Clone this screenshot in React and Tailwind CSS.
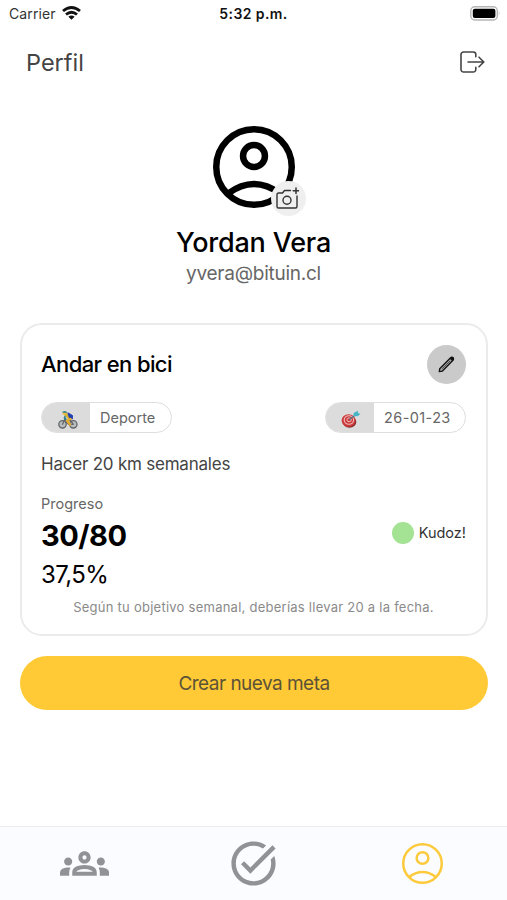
import React from "react";
import { MdOutlineGroups, MdTaskAlt } from "react-icons/md";

function Wifi() {
  return (
    <svg width="19" height="14" viewBox="0 0 19 14" fill="none" stroke="#111" strokeWidth="2.9" className="mb-0.5">
      <path d="M1 5 Q9.500 -2 18 5" />
      <path d="M4 8.500 Q9.500 4 15 8.500" />
      <path d="M9.500 13.800 L6.400 10.800 Q9.500 8.400 12.600 10.800 Z" fill="#111" stroke="none" />
    </svg>
  );
}

function Battery() {
  return (
    <svg width="31" height="15" viewBox="0 0 31 15" className="mb-0.5">
      <rect x="0.800" y="0.800" width="26.500" height="13.200" rx="4" fill="#fff" stroke="#b5b5b5" strokeWidth="1.400" />
      <rect x="2.800" y="2.700" width="22.600" height="9.400" rx="2" fill="#000" />
      <path d="M28.800 5.200 Q30.600 7.400 28.800 9.600Z" fill="#aaa" />
    </svg>
  );
}

function Exit() {
  return (
    <svg width="26" height="22" viewBox="0 0 26 22" fill="none" stroke="#444" strokeWidth="1.600" strokeLinecap="round" strokeLinejoin="round" className="mb-0.5">
      <path d="M15.800 5.800V3.500a2.500 2.500 0 0 0-2.500-2.500H3.500a2.500 2.500 0 0 0-2.500 2.500v15a2.500 2.500 0 0 0 2.500 2.500h9.800a2.500 2.500 0 0 0 2.500-2.500v-2.300" />
      <path d="M8 11h15.500M19 6.200l4.800 4.800-4.800 4.800" />
    </svg>
  );
}

function Person({ size, stroke, color }) {
  return (
    <svg width={size} height={size} viewBox="0 0 82 82" fill="none" stroke={color} strokeWidth={stroke}>
      <circle cx="41" cy="41" r={41 - stroke / 2} />
      <circle cx="41" cy="30" r={14.200 - stroke / 2} />
      <path d="M15 67.500Q41 48.500 67 67.500" />
    </svg>
  );
}

function CameraPlus() {
  return (
    <svg width="23" height="22" viewBox="0 0 23 22" fill="none" stroke="#333" strokeWidth="1.400" strokeLinecap="round" strokeLinejoin="round" className="mr-px mb-px">
      <path d="M14.500 3.500H8.500L6.500 6H2.500Q1 6 1 7.500V19.500Q1 21 2.500 21H19.500Q21 21 21 19.500V9" />
      <circle cx="11" cy="13.200" r="4" />
      <path d="M20 1v5.600M17.200 3.800h5.600" strokeWidth="1.500" />
    </svg>
  );
}

function Pencil() {
  return (
    <svg width="17" height="17" viewBox="0 0 17 17" strokeLinejoin="round">
      <path d="M1.300 15.700L1.700 12.700L12.600 1.800a1.550 1.550 0 0 1 2.400 2.400L4.200 15.200Z" fill="#a5a5a5" stroke="#111" strokeWidth="1.300" />
      <path d="M4.300 12.700L12 5" stroke="#333" strokeWidth="0.700" />
      <path d="M11.800 2.700l2.300 2.300 1.400-1.400a1.600 1.600 0 0 0-2.300-2.300Z" fill="#111" />
    </svg>
  );
}

function Cyclist() {
  return (
    <svg width="20" height="19" viewBox="0 0 20 19" fill="none" strokeLinecap="round" strokeLinejoin="round">
      <g stroke="#62666a" strokeWidth="1.300">
        <circle cx="4.500" cy="14.300" r="3.700" fill="#b9bdc0" />
        <circle cx="15.300" cy="14.300" r="3.700" fill="#b9bdc0" />
        <path d="M4.500 14.300L6.700 9.500M10.500 14.300H15.300L12.500 10.500L7 11L10.500 14.300" />
      </g>
      <path d="M8 4.500L6.500 8L8 9.500" stroke="#2c8393" strokeWidth="1.800" />
      <path d="M8 4.500L11.500 8" stroke="#d9b339" strokeWidth="3.500" />
      <path d="M10.200 3L14.500 5.500L14.300 9L11.500 7.500Z" fill="#243fae" stroke="#243fae" />
      <path d="M12.500 9L9 10.500L12 14.500" stroke="#e3ad2f" strokeWidth="2.400" />
      <circle cx="6.500" cy="3" r="2" fill="#edbd43" />
      <path d="M4 2.600Q5.300 0 8.500 1.600L8.800 3Z" fill="#2c8393" />
    </svg>
  );
}

function Target() {
  return (
    <svg width="20" height="18" viewBox="0 0 20 18" fill="none" className="mr-0.5">
      <ellipse cx="8.500" cy="12" rx="6.800" ry="5.800" fill="#85292b" />
      <ellipse cx="7.600" cy="10.500" rx="7" ry="6.300" fill="#cc3b3c" />
      <ellipse cx="7.900" cy="10" rx="4.700" ry="4.200" stroke="#eebcbc" strokeWidth="1.100" />
      <ellipse cx="8.100" cy="9.800" rx="2.200" ry="1.900" stroke="#eebcbc" strokeWidth="1" />
      <path d="M8.300 9.500L14.500 5" stroke="#4f7480" strokeWidth="1.200" />
      <path d="M12.600 3L17 .7L16.900 3L19.500 3.800L16.700 6.200L12.600 6Z" fill="#44b5c7" />
    </svg>
  );
}

function Tag({ icon, children, className }) {
  return (
    <div className={"flex h-[31px] overflow-hidden rounded-full border border-[#dedede] bg-white " + className}>
      <div className="flex w-12 shrink-0 items-center justify-center bg-[#dcdcdc] pt-[3px] pl-[3px]">{icon}</div>
      <div className="flex flex-1 items-center whitespace-nowrap pt-px text-[14.5px] text-[#666]">{children}</div>
    </div>
  );
}

export default function App() {
  return (
    <div className="flex h-[900px] w-[507px] flex-col overflow-hidden bg-white font-['Inter',sans-serif] text-black">
      <div className="grid h-7 shrink-0 grid-cols-3 items-center pr-[6px] pl-[9px]">
        <div className="flex items-center gap-[6px] text-[14px] leading-7 text-[#333]">
          <span className="tracking-[0.1px]">Carrier</span>
          <Wifi />
        </div>
        <div className="pr-[3px] text-center text-[14px] font-semibold leading-7 tracking-[0.4px] text-[#111]">5:32 p.m.</div>
        <div className="flex justify-end"><Battery /></div>
      </div>

      <header className="flex h-[70px] shrink-0 items-center justify-between pr-[21px] pl-[26px]">
        <h1 className="text-[23.5px] text-[#444]">Perfil</h1>
        <Exit />
      </header>

      <section className="flex h-[225px] shrink-0 flex-col items-center pt-7">
        <div className="relative h-[82px] w-[82px]">
          <Person size={82} stroke={6.5} color="#000" />
          <div className="absolute top-[55px] left-[58px] flex h-[35px] w-[35px] items-center justify-center rounded-full bg-[#efefef]">
            <CameraPlus />
          </div>
        </div>
        <h2 className="mt-[18px] text-[27px] font-medium leading-[34px] tracking-[-0.2px]">Yordan Vera</h2>
        <p className="mt-px text-[19px] leading-[26px] tracking-[-0.25px] text-[#666]">yvera@bituin.cl</p>
      </section>

      <main className="mr-[19px] ml-[20px] flex flex-1 flex-col">
        <article className="flex h-[313px] flex-col rounded-[22px] border-2 border-[#ebebeb] pt-[19px] pr-5 pl-[19px]">
          <div className="flex h-10 items-center justify-between">
            <h3 className="text-[22px] font-medium tracking-[-0.6px]">Andar en bici</h3>
            <div className="flex h-[39px] w-[39px] items-center justify-center rounded-full bg-[#cacaca]"><Pencil /></div>
          </div>
          <div className="mt-[18px] flex justify-between">
            <Tag icon={<Cyclist />} className="w-[131px]"><span className="pl-[10px]">Deporte</span></Tag>
            <Tag icon={<Target />} className="w-[141px]"><span className="pl-[10px] tracking-[0.4px]">26-01-23</span></Tag>
          </div>
          <p className="mt-[19px] text-[17px] leading-6 tracking-[-0.22px] text-[#444]">Hacer 20 km semanales</p>
          <p className="mt-[18px] text-[14.5px] leading-5 text-[#666]">Progreso</p>
          <div className="flex h-[43px] items-center justify-between">
            <strong className="text-[29px] font-bold tracking-[-0.5px]">30/80</strong>
            <div className="-mt-[6px] flex items-center gap-[5px] text-[14.5px] text-[#333]">
              <span className="h-[22px] w-[22px] rounded-full bg-[#a4e294]" />
              <span>Kudoz!</span>
            </div>
          </div>
          <p className="mt-px text-[24px] leading-[34px] tracking-[-0.6px]">37,5%</p>
          <p className="mt-[5px] whitespace-nowrap text-center text-[13px] leading-5 tracking-[0.25px] text-[#8a8a8a]">Según tu objetivo semanal, deberías llevar 20 a la fecha.</p>
        </article>
        <button className="mt-5 h-[54px] rounded-full bg-[#ffca36] pt-[3px] text-[19px] tracking-[-0.53px] text-[#5c5337]">Crear nueva meta</button>
      </main>

      <nav className="grid h-[74px] shrink-0 grid-cols-3 border-t border-[#ececec] bg-[#fafcff] text-[#919295]">
        <div className="flex items-center justify-center"><MdOutlineGroups size={49} /></div>
        <div className="flex items-center justify-center"><MdTaskAlt size={53} /></div>
        <div className="flex items-center justify-center"><Person size={41} stroke={5} color="#fdca3c" /></div>
      </nav>
    </div>
  );
}
